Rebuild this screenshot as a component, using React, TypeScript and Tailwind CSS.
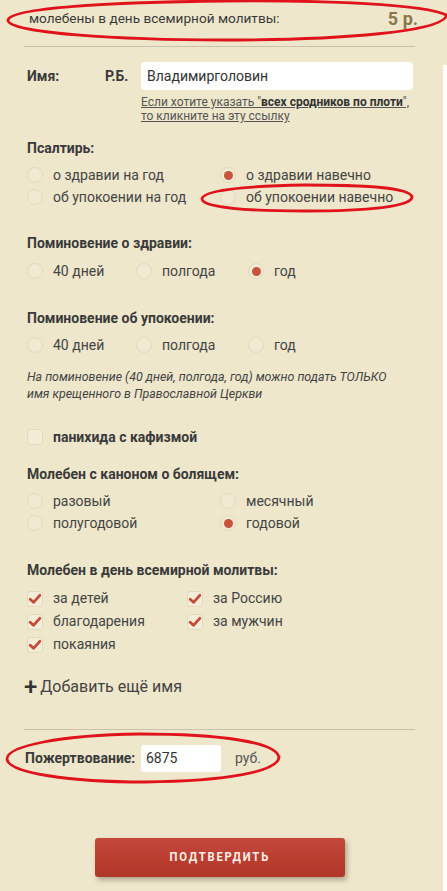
import React from "react";

type Opt = { label: string; checked?: boolean };

function Radio({ checked }: { checked?: boolean }) {
  return (
    <span className="flex h-[16px] w-[16px] shrink-0 items-center justify-center rounded-full border border-[#e2dabd] bg-[#f1ead3]">
      {checked && <span className="h-[9px] w-[9px] rounded-full bg-[#c8533c]" />}
    </span>
  );
}

function Check({ checked }: { checked?: boolean }) {
  return (
    <span className="flex h-[16px] w-[16px] shrink-0 items-center justify-center rounded-[3px] border border-[#e2dabd] bg-[#f3ecd6]">
      {checked && (
        <svg viewBox="0 0 16 16" className="h-[14px] w-[14px]">
          <path d="M2.5 8.2 L6.3 11.8 L13.5 3.8" fill="none" stroke="#c0493c" strokeWidth="3.2" strokeLinecap="round" strokeLinejoin="round" />
        </svg>
      )}
    </span>
  );
}

function RadioItem({ opt, w = "" }: { opt: Opt; w?: string }) {
  return (
    <div className={`flex h-[22px] items-center gap-[10px] ${w}`}>
      <Radio checked={opt.checked} />
      <span className="text-[14px] text-[#444]">{opt.label}</span>
    </div>
  );
}

function CheckItem({ opt }: { opt: Opt }) {
  return (
    <div className="flex h-[23px] items-center gap-[10px]">
      <Check checked={opt.checked} />
      <span className="text-[14px] text-[#444]">{opt.label}</span>
    </div>
  );
}

function Heading({ children, className = "" }: { children: React.ReactNode; className?: string }) {
  return <div className={`h-[20px] text-[14px] font-bold leading-[20px] text-[#3a3a3a] ${className}`}>{children}</div>;
}

export default function App() {
  return (
    <div className="relative flex min-h-[891px] bg-white font-['Roboto','Liberation_Sans',sans-serif] text-[#333]">
      <div className="w-[443px] bg-[#eee7cb] pb-[14px]">
        <div className="flex h-[36px] items-center justify-between pl-[29px] pr-[25px]">
          <span className="text-[13.6px] text-[#3a3a3a]">молебены в день всемирной молитвы:</span>
          <span className="text-[18px] font-bold text-[#8a7748]">5 р.</span>
        </div>
        <div className="ml-[24px] mr-[28px] mt-[10px] border-t border-[#c9c2aa]" />

        <div className="pl-[27px] pr-[30px]">
          <div className="mt-[15px] flex items-center">
            <span className="w-[78px] text-[14px] font-bold text-[#3a3a3a]">Имя:</span>
            <span className="w-[36px] text-[14px] font-bold text-[#3a3a3a]">Р.Б.</span>
            <div className="flex h-[28px] flex-1 items-center rounded-[3px] bg-white px-[6px] text-[14px] text-[#333]">
              Владимирголовин
            </div>
          </div>
          <div className="ml-[114px] mt-[5px] text-[12px] leading-[14px] text-[#555] underline">
            Если хотите указать "<b className="text-[#333]">всех сродников по плоти</b>",
            <br />
            то кликните на эту ссылку
          </div>

          <Heading className="mt-[15px]">Псалтирь:</Heading>
          <div className="mt-[6px] grid grid-cols-[193px_1fr]">
            <RadioItem opt={{ label: "о здравии на год" }} />
            <RadioItem opt={{ label: "о здравии навечно", checked: true }} />
            <RadioItem opt={{ label: "об упокоении на год" }} />
            <RadioItem opt={{ label: "об упокоении навечно" }} />
          </div>

          <Heading className="mt-[25px]">Поминовение о здравии:</Heading>
          <div className="mt-[7px] flex">
            <RadioItem opt={{ label: "40 дней" }} w="w-[109px]" />
            <RadioItem opt={{ label: "полгода" }} w="w-[112px]" />
            <RadioItem opt={{ label: "год", checked: true }} />
          </div>

          <Heading className="mt-[26px]">Поминовение об упокоении:</Heading>
          <div className="mt-[6px] flex">
            <RadioItem opt={{ label: "40 дней" }} w="w-[109px]" />
            <RadioItem opt={{ label: "полгода" }} w="w-[112px]" />
            <RadioItem opt={{ label: "год" }} />
          </div>
          <p className="mt-[12px] text-[12.4px] italic leading-[17px] text-[#444]">
            На поминовение (40 дней, полгода, год) можно подать ТОЛЬКО
            <br />
            имя крещенного в Православной Церкви
          </p>

          <div className="mt-[25px] flex h-[20px] items-center gap-[10px]">
            <Check />
            <span className="text-[14px] font-bold text-[#3a3a3a]">панихида с кафизмой</span>
          </div>

          <Heading className="mt-[17px]">Молебен с каноном о болящем:</Heading>
          <div className="mt-[6px] grid grid-cols-[193px_1fr]">
            <RadioItem opt={{ label: "разовый" }} />
            <RadioItem opt={{ label: "месячный" }} />
            <RadioItem opt={{ label: "полугодовой" }} />
            <RadioItem opt={{ label: "годовой", checked: true }} />
          </div>

          <Heading className="mt-[26px]">Молебен в день всемирной молитвы:</Heading>
          <div className="mt-[7px] grid grid-cols-[160px_1fr]">
            <CheckItem opt={{ label: "за детей", checked: true }} />
            <CheckItem opt={{ label: "за Россию", checked: true }} />
            <CheckItem opt={{ label: "благодарения", checked: true }} />
            <CheckItem opt={{ label: "за мужчин", checked: true }} />
            <CheckItem opt={{ label: "покаяния", checked: true }} />
          </div>

          <div className="-ml-[3px] mt-[20px] flex h-[22px] items-center gap-[3px] text-[16px] text-[#444]">
            <span className="text-[24px] font-medium leading-none text-[#333]">+</span>
            <span>Добавить ещё имя</span>
          </div>
        </div>

        <div className="ml-[24px] mr-[28px] mt-[31px] border-t border-[#c9c2aa]" />

        <div className="mt-[15px] flex h-[27px] items-center pl-[25px]">
          <span className="w-[116px] text-[14px] font-bold text-[#3a3a3a]">Пожертвование:</span>
          <div className="flex h-[27px] w-[80px] items-center rounded-[3px] bg-white px-[5px] text-[14px] text-[#333]">6875</div>
          <span className="ml-[14px] text-[14px] text-[#555]">руб.</span>
        </div>

        <div className="ml-[95px] mt-[66px] flex h-[39px] w-[250px] items-center justify-center rounded-[3px] bg-gradient-to-b from-[#c4473a] to-[#b03628] shadow-[2px_3px_5px_rgba(60,40,20,0.35)]">
          <span className="scale-x-90 text-[12.5px] font-bold tracking-[2px] text-[#fbeee6]">ПОДТВЕРДИТЬ</span>
        </div>
      </div>
      <div className="w-[4px]">
        <div className="h-[65px] bg-[#eee7cb]" />
      </div>

      <svg className="pointer-events-none absolute left-0 top-0" width="447" height="891" viewBox="0 0 447 891">
        <g fill="none" stroke="#e0121b" strokeWidth="2.8">
          <path d="M448 16 C 430 4, 320 0, 225 1 C 110 2, 10 8, 8 20 C 7 33, 120 40, 225 40 C 340 40, 446 32, 447 14" />
          <path d="M412 197 C 410 187, 360 185, 305 185 C 245 186, 202 190, 202 199 C 203 208, 250 211, 305 211 C 365 211, 414 207, 412 196" />
          <path d="M279 758 C 278 742, 220 734, 140 734 C 60 735, 7 746, 7 759 C 8 773, 70 782, 145 782 C 225 781, 280 772, 279 756" />
        </g>
      </svg>
    </div>
  );
}
